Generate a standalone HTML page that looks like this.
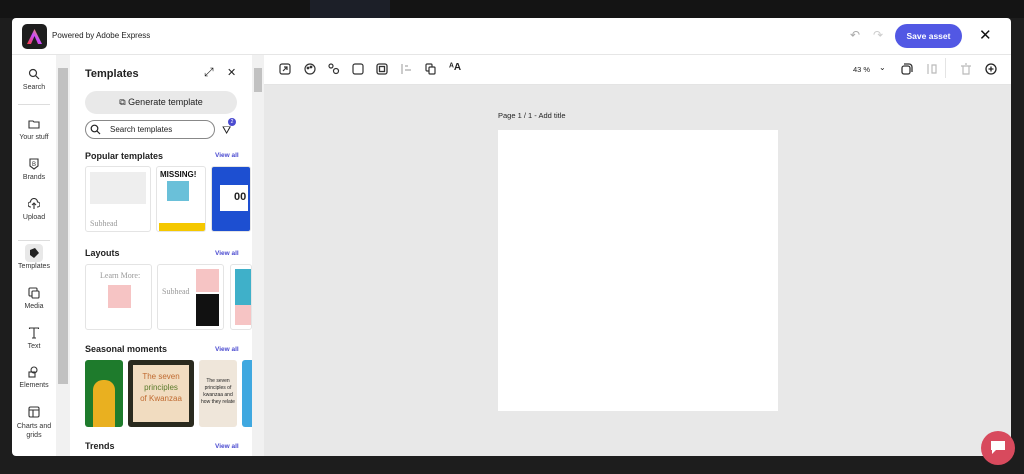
<!DOCTYPE html><html><head><style>
*{box-sizing:border-box;margin:0;padding:0}
body{width:1024px;height:474px;background:#1d1d1d;font-family:"Liberation Sans",sans-serif;position:relative;overflow:hidden;color:#222}
.a{position:absolute}
.modal{left:12px;top:18px;width:999px;height:438px;background:#fff;border-radius:4px;overflow:hidden}
.rail .it{position:absolute;left:0;width:44px;text-align:center;font-size:7px;color:#333}
.rail svg{display:block;margin:0 auto 4px}
.h{font-size:9px;font-weight:bold;color:#222}
.va{font-size:6.5px;font-weight:bold;color:#4b4bd0}
.th{position:absolute;border:1px solid #e4e4e4;border-radius:3px;overflow:hidden;background:#fff}
</style></head><body>
<div class="a" style="left:0;top:0;width:1024px;height:18px;background:#141414"></div>
<div class="a" style="left:310px;top:0;width:80px;height:18px;background:#1c1f28"></div>
<div class="a modal">
 <div class="a" style="left:10px;top:6px;width:25px;height:25px;background:#1e1e1e;border-radius:5px"></div>
 <svg class="a" style="left:14px;top:10px" width="17" height="17" viewBox="0 0 17 17"><defs><linearGradient id="g" x1="0" y1="1" x2="1" y2="0"><stop offset="0" stop-color="#ff3b3b"/><stop offset=".5" stop-color="#c84bff"/><stop offset="1" stop-color="#ffb400"/></linearGradient></defs><path d="M8.5 1L16 16h-4l-3.5-8L5 16H1z" fill="url(#g)"/></svg>
 <div class="a" style="left:40px;top:13px;font-size:8px;color:#222">Powered by Adobe Express</div>
 <div class="a" style="left:838px;top:10px;font-size:12px;color:#aaa">↶</div>
 <div class="a" style="left:861px;top:10px;font-size:12px;color:#ccc">↷</div>
 <div class="a" style="left:883px;top:6px;width:67px;height:24px;background:#5258e4;border-radius:12px;color:#fff;font-size:8.5px;font-weight:bold;text-align:center;line-height:24px">Save asset</div>
 <div class="a" style="left:967px;top:8px;font-size:15px;color:#111">✕</div>
 <div class="a" style="left:0;top:36px;width:999px;height:1px;background:#e6e6e6"></div>
 <div class="rail">
  <div class="it" style="top:50px"><svg width="12" height="12" viewBox="0 0 12 12" fill="none" stroke="#333" stroke-width="1.2"><circle cx="5" cy="5" r="3.5"/><path d="M7.5 7.5L11 11"/></svg>Search</div>
  <div class="a" style="left:6px;top:86px;width:32px;height:1px;background:#ddd"></div>
  <div class="it" style="top:100px"><svg width="12" height="12" viewBox="0 0 12 12" fill="none" stroke="#333" stroke-width="1.1"><path d="M1 3h4l1 1h5v6H1z"/></svg>Your stuff</div>
  <div class="it" style="top:140px"><svg width="12" height="12" viewBox="0 0 12 12" fill="none" stroke="#333" stroke-width="1.1"><path d="M2 1h8v7l-4 3-4-3z"/><text x="4" y="8" font-size="6" fill="#333" stroke="none">B</text></svg>Brands</div>
  <div class="it" style="top:180px"><svg width="12" height="12" viewBox="0 0 12 12" fill="none" stroke="#333" stroke-width="1.1"><path d="M3 9H2.5a2.5 2.5 0 010-5 3.5 3.5 0 017 0 2.5 2.5 0 010 5H9M6 11V5M4 7l2-2 2 2"/></svg>Upload</div>
  <div class="a" style="left:6px;top:222px;width:32px;height:1px;background:#ddd"></div>
  <div class="a" style="left:13px;top:226px;width:18px;height:18px;background:#e8e8e8;border-radius:4px"></div>
  <div class="it" style="top:229px"><svg width="12" height="12" viewBox="0 0 12 12"><path d="M2 3l5-2 4 5-5 5-4-3z" fill="#222"/></svg>Templates</div>
  <div class="it" style="top:269px"><svg width="12" height="12" viewBox="0 0 12 12" fill="none" stroke="#333" stroke-width="1.1"><rect x="1" y="1" width="8" height="8" rx="1"/><rect x="4" y="4" width="7" height="7" rx="1" fill="#fff"/></svg>Media</div>
  <div class="it" style="top:309px"><svg width="12" height="12" viewBox="0 0 12 12" fill="none" stroke="#333" stroke-width="1.1"><path d="M1.5 2V1h9v1M6 1v10M4 11h4"/></svg>Text</div>
  <div class="it" style="top:348px"><svg width="12" height="12" viewBox="0 0 12 12" fill="none" stroke="#333" stroke-width="1.1"><circle cx="6" cy="4" r="3"/><rect x="1" y="6" width="6" height="5"/></svg>Elements</div>
  <div class="it" style="top:388px;line-height:9px"><svg width="12" height="12" viewBox="0 0 12 12" fill="none" stroke="#333" stroke-width="1.1"><rect x="1" y="1" width="10" height="10" rx="1.5"/><path d="M1 4h10M5 4v7"/></svg>Charts and<br>grids</div>
 </div>
 <div class="a" style="left:44px;top:37px;width:14px;height:401px;background:#f1f1f1"></div>
 <div class="a" style="left:46px;top:50px;width:10px;height:316px;background:#c1c1c1"></div>
 <div class="a" style="left:58px;top:37px;width:182px;height:401px;background:#fff;overflow:hidden">
  <div class="a h" style="left:15px;top:13px;font-size:11px">Templates</div>
  <div class="a" style="left:134px;top:10px;font-size:12px">⤢</div>
  <div class="a" style="left:157px;top:11px;font-size:11px">✕</div>
  <div class="a" style="left:15px;top:36px;width:152px;height:23px;background:#e9e9e9;border-radius:12px;font-size:9px;text-align:center;line-height:23px;color:#222">⧉ Generate template</div>
  <div class="a" style="left:15px;top:65px;width:130px;height:19px;border:1px solid #888;border-radius:10px;font-size:8px;line-height:17px;padding-left:24px;color:#222">Search templates</div>
  <svg class="a" style="left:20px;top:69px" width="11" height="11" viewBox="0 0 11 11" fill="none" stroke="#222" stroke-width="1.2"><circle cx="4.5" cy="4.5" r="3.3"/><path d="M7 7l3 3"/></svg>
  <div class="a" style="left:152px;top:70px;font-size:11px">⛛</div>
  <div class="a" style="left:158px;top:63px;width:8px;height:8px;border-radius:4px;background:#4b4bd0;color:#fff;font-size:5px;text-align:center;line-height:8px">2</div>
  <div class="a h" style="left:15px;top:96px">Popular templates</div><div class="a va" style="left:145px;top:97px">View all</div>
  <div class="th" style="left:15px;top:111px;width:66px;height:66px"><div class="a" style="left:4px;top:5px;width:56px;height:32px;background:#eee"></div><div class="a" style="left:4px;top:52px;font-size:8px;font-family:'Liberation Serif';color:#999">Subhead</div></div>
  <div class="th" style="left:86px;top:111px;width:50px;height:66px"><div class="a" style="left:3px;top:3px;font-size:8px;font-weight:bold;color:#111">MISSING!</div><div class="a" style="left:10px;top:14px;width:22px;height:20px;background:#6ac0d9"></div><div class="a" style="left:2px;top:56px;width:46px;height:9px;background:#f5c800"></div></div>
  <div class="th" style="left:141px;top:111px;width:40px;height:66px;background:#1d4fd1"><div class="a" style="left:8px;top:18px;width:28px;height:26px;background:#fff"></div><div class="a" style="left:22px;top:24px;font-size:11px;font-weight:bold">00</div></div>
  <div class="a h" style="left:15px;top:193px">Layouts</div><div class="a va" style="left:145px;top:195px">View all</div>
  <div class="th" style="left:15px;top:209px;width:67px;height:66px"><div class="a" style="left:14px;top:6px;font-size:8px;font-family:'Liberation Serif';color:#999">Learn More:</div><div class="a" style="left:22px;top:20px;width:23px;height:23px;background:#f6c4c4"></div></div>
  <div class="th" style="left:87px;top:209px;width:67px;height:66px"><div class="a" style="left:4px;top:22px;font-size:8px;font-family:'Liberation Serif';color:#999">Subhead</div><div class="a" style="left:38px;top:4px;width:23px;height:23px;background:#f6c4c4"></div><div class="a" style="left:38px;top:29px;width:23px;height:32px;background:#111"></div></div>
  <div class="th" style="left:160px;top:209px;width:22px;height:66px"><div class="a" style="left:4px;top:4px;width:18px;height:36px;background:#3fb0c9"></div><div class="a" style="left:4px;top:40px;width:18px;height:20px;background:#f6c4c4"></div></div>
  <div class="a h" style="left:15px;top:289px">Seasonal moments</div><div class="a va" style="left:145px;top:291px">View all</div>
  <div class="a" style="left:15px;top:305px;width:38px;height:67px;background:#1e7b2c;border-radius:3px"><div class="a" style="left:8px;top:20px;width:22px;height:47px;background:#e9b020;border-radius:10px 10px 0 0"></div></div>
  <div class="a" style="left:58px;top:305px;width:66px;height:67px;background:#2a2a1e;border-radius:3px"><div class="a" style="left:5px;top:5px;width:56px;height:57px;background:#f1dcc0;font-size:8px;color:#c06a30;text-align:center;line-height:11px;padding-top:6px">The seven<br><span style="color:#5a7a2a">principles</span><br>of Kwanzaa</div></div>
  <div class="a" style="left:129px;top:305px;width:38px;height:67px;background:#efe6da;border-radius:3px;font-size:5px;text-align:center;padding-top:18px;line-height:7px">The seven principles of kwanzaa and how they relate</div>
  <div class="a" style="left:172px;top:305px;width:10px;height:67px;background:#3fa8e0;border-radius:3px 0 0 3px"></div>
  <div class="a h" style="left:15px;top:386px">Trends</div><div class="a va" style="left:145px;top:388px">View all</div>
 </div>
 <div class="a" style="left:240px;top:37px;width:12px;height:401px;background:#f1f1f1"></div>
 <div class="a" style="left:242px;top:50px;width:8px;height:24px;background:#c1c1c1"></div>
 <div class="a" style="left:252px;top:37px;width:747px;height:30px;background:#fff;border-bottom:1px solid #e4e4e4"></div>
 <svg class="a" style="left:267px;top:45px" width="12" height="12" fill="none" stroke="#333" stroke-width="1.2"><rect x="1" y="1" width="10" height="10" rx="2"/><path d="M4 8l4-4M5 4h3v3"/></svg>
 <svg class="a" style="left:292px;top:45px" width="12" height="12" fill="none" stroke="#333" stroke-width="1.2"><circle cx="6" cy="6" r="5"/><circle cx="4" cy="5" r=".8" fill="#333"/><circle cx="7" cy="4" r=".8" fill="#333"/></svg>
 <svg class="a" style="left:316px;top:45px" width="12" height="12" fill="none" stroke="#333" stroke-width="1.2"><circle cx="3" cy="3" r="2"/><circle cx="8" cy="8" r="2.5"/></svg>
 <svg class="a" style="left:340px;top:45px" width="12" height="12" fill="none" stroke="#333" stroke-width="1.2"><rect x="1" y="1" width="10" height="10" rx="2"/></svg>
 <svg class="a" style="left:364px;top:45px" width="12" height="12" fill="none" stroke="#333" stroke-width="1.3"><rect x="1" y="1" width="10" height="10" rx="2"/><rect x="3.5" y="3.5" width="5" height="5"/></svg>
 <svg class="a" style="left:389px;top:45px" width="12" height="12" fill="none" stroke="#aaa" stroke-width="1.2"><path d="M1 1v10M4 3h3M4 7h6"/></svg>
 <svg class="a" style="left:413px;top:45px" width="12" height="12" fill="none" stroke="#333" stroke-width="1.2"><rect x="1" y="1" width="6" height="7" rx="1"/><rect x="4" y="4" width="6" height="7" rx="1" fill="#fff"/></svg>
 <div class="a" style="left:437px;top:44px;font-size:10px;font-weight:bold">ᴬA</div>
 <div class="a" style="left:841px;top:47px;font-size:7.5px;color:#222">43 %</div>
 <div class="a" style="left:867px;top:45px;font-size:8px">⌄</div>
 <svg class="a" style="left:889px;top:45px" width="12" height="12" fill="none" stroke="#333" stroke-width="1.3"><rect x="1" y="3" width="8" height="8" rx="2"/><path d="M3 1h5a3 3 0 013 3v5"/></svg>
 <svg class="a" style="left:914px;top:45px" width="12" height="12" fill="none" stroke="#bbb" stroke-width="1.2"><path d="M2 1v10M6 2h4v8H6z"/></svg>
 <div class="a" style="left:933px;top:40px;width:1px;height:20px;background:#e4e4e4"></div>
 <svg class="a" style="left:948px;top:45px" width="12" height="12" fill="none" stroke="#bbb" stroke-width="1.2"><path d="M1 3h10M3 3v8h6V3M5 1h2"/></svg>
 <svg class="a" style="left:973px;top:45px" width="12" height="12" fill="none" stroke="#222" stroke-width="1.3"><circle cx="6" cy="6" r="5"/><path d="M6 3.5v5M3.5 6h5"/></svg>
 <div class="a" style="left:252px;top:67px;width:747px;height:371px;background:#e8e8e8"></div>
 <div class="a" style="left:486px;top:93px;font-size:7.5px;color:#222">Page 1 / 1 - Add title</div>
 <div class="a" style="left:486px;top:112px;width:280px;height:281px;background:#fff"></div>
</div>
<div class="a" style="left:981px;top:431px;width:34px;height:34px;border-radius:17px;background:#d84a5d"></div>
<svg class="a" style="left:990px;top:440px" width="16" height="15"><path d="M1 1h14v9H6l-4 4v-4H1z" fill="#fff"/></svg>
</body></html>
